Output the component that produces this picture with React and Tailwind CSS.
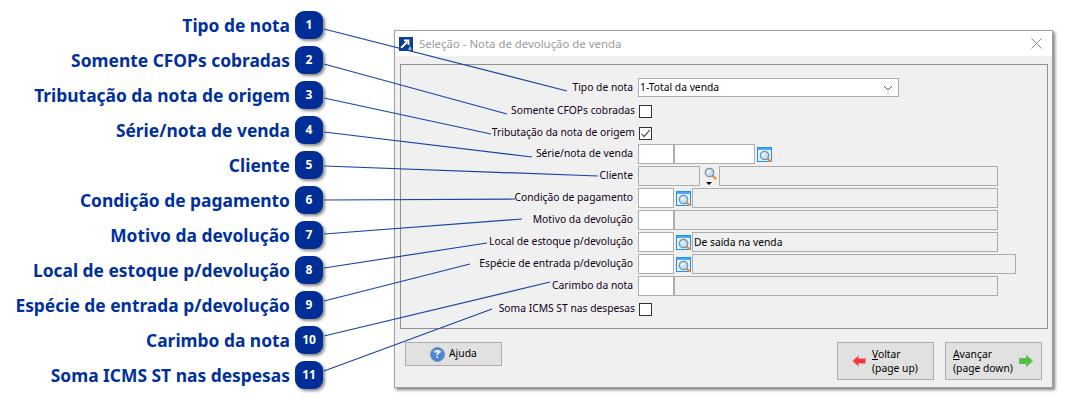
import React from 'react'

const callouts = [
  'Tipo de nota',
  'Somente CFOPs cobradas',
  'Tributação da nota de origem',
  'Série/nota de venda',
  'Cliente',
  'Condição de pagamento',
  'Motivo da devolução',
  'Local de estoque p/devolução',
  'Espécie de entrada p/devolução',
  'Carimbo da nota',
  'Soma ICMS ST nas despesas',
]

const leaders = [
  [324, 29, 567, 91],
  [324, 64, 507, 114],
  [324, 98, 491, 134],
  [324, 132, 532, 157],
  [324, 166, 598, 176],
  [324, 200, 515, 199],
  [324, 234, 522, 219],
  [324, 268, 487, 243],
  [324, 301, 470, 264],
  [324, 336, 550, 282],
  [324, 371, 492, 309],
]

function Magnifier() {
  return (
    <g>
      <path d="M9.5 9.5L12.5 12.5" stroke="#f08a3c" strokeWidth="2.4" strokeLinecap="round" />
      <circle cx="6.5" cy="6.5" r="4.2" fill="#bfe0f5" stroke="#7f8f9c" strokeWidth="1.3" />
      <circle cx="5.5" cy="5.5" r="1.5" fill="#eef8ff" />
    </g>
  )
}

function LookupIcon() {
  return (
    <svg width="15" height="15" viewBox="0 0 15 15" className="shrink-0">
      <rect x="0.5" y="0.5" width="14" height="14" fill="#e8f3fc" stroke="#1e90f0" />
      <rect x="1" y="1" width="13" height="2" fill="#4aa8f5" />
      <g transform="translate(1 2)">
        <Magnifier />
      </g>
    </svg>
  )
}

function Input({ w, muted, children }) {
  return (
    <div className={`h-full shrink-0 border border-[#adadad] px-[1px] leading-[18px] ${w} ${muted ? 'bg-[#f0f0f0]' : 'bg-white'}`}>
      {children}
    </div>
  )
}

function Row({ label, className = 'h-5 mt-[2px]', pad = 'pr-[5px]', children }) {
  return (
    <div className={`flex items-center ${className}`}>
      <div className={`w-[237px] shrink-0 text-right whitespace-nowrap text-[#10001a] ${pad}`}>{label}</div>
      {children}
    </div>
  )
}

function Check({ checked }) {
  return (
    <div className="ml-[1px] w-[13px] h-[13px] border border-[#333333] bg-white flex items-center justify-center">
      {checked && (
        <svg width="11" height="11" viewBox="0 0 11 11">
          <path d="M1.5 5.8L4.2 8.5L9.6 2.2" fill="none" stroke="#555555" strokeWidth="1.2" />
        </svg>
      )}
    </div>
  )
}

export default function App() {
  return (
    <div className="relative flex w-[1066px] h-[405px] overflow-hidden bg-white font-['Noto_Sans',sans-serif]">
      {/* Callouts */}
      <div className="w-[323px] shrink-0 pt-[11px] flex flex-col gap-[7px]">
        {callouts.map((text, i) => (
          <div key={text} className="flex items-center justify-end gap-[5px] h-[28px]">
            <span className="text-[17.4px] font-bold text-[#00309c] whitespace-nowrap pt-[1px]">{text}</span>
            <div className="w-[28px] h-[28px] rounded-[9px] bg-[#002d96] shadow-[2px_2px_3px_rgba(0,0,0,0.45)] flex items-center justify-center text-white text-[12px] font-bold">
              {i + 1}
            </div>
          </div>
        ))}
      </div>

      {/* Dialog */}
      <div className="ml-[71px] mt-[30px] w-[659px] h-[358px] border border-[#a0a0a0] bg-[#f0f0f0] shadow-[2px_2px_3px_rgba(0,0,0,0.5)] flex flex-col text-[10.3px] text-black">
        <div className="h-[25px] bg-white flex items-center pl-[4px] pr-[10px] shrink-0">
          <svg width="14" height="14" viewBox="0 0 14 14" className="shrink-0">
            <rect width="14" height="14" fill="#0b3f8f" />
            <path d="M2 11L8 5M5 3.5H9.5V8" fill="none" stroke="white" strokeWidth="1.8" />
            <path d="M9 13L11 8.5L13 13Z" fill="#8fb4d8" />
          </svg>
          <span className="ml-[6px] text-[11.4px] text-[#9b9b9b]">Seleção - Nota de devolução de venda</span>
          <svg width="11" height="11" viewBox="0 0 11 11" className="ml-auto">
            <path d="M0.5 0.5L10.5 10.5M10.5 0.5L0.5 10.5" stroke="#8a8a8a" />
          </svg>
        </div>

        <div className="ml-[5px] mr-[4px] mt-[8px] h-[265px] border border-[#8f8f8f] pt-[13px] shrink-0">
          <Row label="Tipo de nota" className="h-[19px]">
            <div className="w-[261px] h-full border border-[#adadad] bg-white flex items-center px-[1px]">
              <span>1-Total da venda</span>
              <svg width="10" height="6" viewBox="0 0 10 6" className="ml-auto mr-[4px]">
                <path d="M1 1L5 5L9 1" fill="none" stroke="#555555" />
              </svg>
            </div>
          </Row>
          <Row label="Somente CFOPs cobradas" className="h-[22px] mt-[3px]" pad="pr-[3px]"><Check /></Row>
          <Row label="Tributação da nota de origem" className="h-[22px]" pad="pr-[3px]"><Check checked /></Row>
          <Row label="Série/nota de venda" className="h-5">
            <Input w="w-[36px]" />
            <Input w="w-[81px]" />
            <div className="ml-[2px]"><LookupIcon /></div>
          </Row>
          <Row label="Cliente">
            <Input w="w-[62px]" muted />
            <div className="relative w-[19px] h-full shrink-0">
              <svg width="14" height="14" viewBox="0 0 14 14" className="absolute left-[3px] top-0"><Magnifier /></svg>
              <div className="absolute left-[6px] bottom-[1px] border-x-[3px] border-x-transparent border-t-[3px] border-t-black" />
            </div>
            <Input w="w-[279px]" muted />
          </Row>
          <Row label="Condição de pagamento">
            <Input w="w-[36px]" />
            <div className="ml-[2px] mr-[1px]"><LookupIcon /></div>
            <Input w="w-[306px]" muted />
          </Row>
          <Row label="Motivo da devolução">
            <Input w="w-[36px]" />
            <Input w="w-[324px]" muted />
          </Row>
          <Row label="Local de estoque p/devolução">
            <Input w="w-[36px]" />
            <div className="ml-[2px] mr-[1px]"><LookupIcon /></div>
            <Input w="w-[306px]" muted>De saída na venda</Input>
          </Row>
          <Row label="Espécie de entrada p/devolução">
            <Input w="w-[36px]" />
            <div className="ml-[2px] mr-[1px]"><LookupIcon /></div>
            <Input w="w-[324px]" muted />
          </Row>
          <Row label="Carimbo da nota">
            <Input w="w-[36px]" />
            <Input w="w-[324px]" muted />
          </Row>
          <Row label="Soma ICMS ST nas despesas" className="h-[22px] mt-[2px]" pad="pr-[3px]"><Check /></Row>
        </div>

        <div className="flex items-start mt-[13px] ml-[10px] mr-[10px]">
          <button className="w-[97px] h-[24px] border border-[#adadad] bg-[#e1e1e1] flex items-center pl-[24px] gap-[4px]">
            <svg width="15" height="15" viewBox="0 0 15 15" className="shrink-0">
              <circle cx="7.5" cy="7.5" r="7" fill="#4a86d8" stroke="#7c8fa8" />
              <path d="M3 5a5 4 0 0 1 9 0a6 3 0 0 1-9 0Z" fill="#a8cdf5" />
              <text x="7.5" y="11" textAnchor="middle" fontSize="10" fontWeight="700" fill="white">?</text>
            </svg>
            <span>A<span className="underline">j</span>uda</span>
          </button>
          <button className="ml-auto w-[97px] h-[38px] border border-[#adadad] bg-[#e1e1e1] flex items-center pl-[14px] gap-[6px] text-left leading-[14px]">
            <svg width="14" height="12" viewBox="0 0 14 12" className="shrink-0">
              <path d="M0.5 6L6.5 0.5V3.5H13.5V8.5H6.5V11.5Z" fill="#f5353c" stroke="#e89a9a" />
            </svg>
            <span><span className="underline">V</span>oltar<br />(page up)</span>
          </button>
          <button className="ml-[11px] w-[97px] h-[38px] border border-[#adadad] bg-[#e1e1e1] flex items-center pl-[7px] pr-[8px] justify-between text-left leading-[14px]">
            <span className="whitespace-nowrap"><span className="underline">A</span>vançar<br />(page down)</span>
            <svg width="14" height="12" viewBox="0 0 14 12" className="shrink-0">
              <path d="M13.5 6L7.5 0.5V3.5H0.5V8.5H7.5V11.5Z" fill="#48c832" stroke="#7fa878" />
            </svg>
          </button>
        </div>
      </div>

      {/* Leader lines */}
      <svg width="1066" height="405" className="absolute inset-0 pointer-events-none">
        {leaders.map(([x1, y1, x2, y2]) => (
          <line key={y1} x1={x1} y1={y1} x2={x2} y2={y2} stroke="#1a44a4" strokeWidth="1.2" />
        ))}
      </svg>
    </div>
  )
}
